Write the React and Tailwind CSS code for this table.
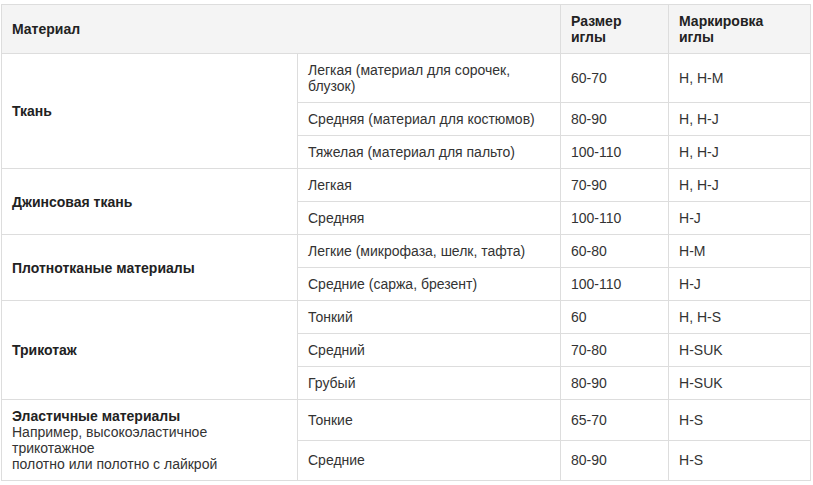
import React from 'react';

const rows = [
  {
    material: 'Ткань',
    items: [
      ['Легкая (материал для сорочек, блузок)', '60-70', 'H, H-M'],
      ['Средняя (материал для костюмов)', '80-90', 'H, H-J'],
      ['Тяжелая (материал для пальто)', '100-110', 'H, H-J'],
    ],
  },
  {
    material: 'Джинсовая ткань',
    items: [
      ['Легкая', '70-90', 'H, H-J'],
      ['Средняя', '100-110', 'H-J'],
    ],
  },
  {
    material: 'Плотнотканые материалы',
    items: [
      ['Легкие (микрофаза, шелк, тафта)', '60-80', 'H-M'],
      ['Средние (саржа, брезент)', '100-110', 'H-J'],
    ],
  },
  {
    material: 'Трикотаж',
    items: [
      ['Тонкий', '60', 'H, H-S'],
      ['Средний', '70-80', 'H-SUK'],
      ['Грубый', '80-90', 'H-SUK'],
    ],
  },
  {
    material: 'Эластичные материалы',
    note: ['Например, высокоэластичное трикотажное', 'полотно или полотно с лайкрой'],
    items: [
      ['Тонкие', '65-70', 'H-S'],
      ['Средние', '80-90', 'H-S'],
    ],
  },
];

const cell = 'border border-[#dddddd] px-[10px] py-2 align-middle';

export default function App() {
  return (
    <div className="bg-white min-h-[485px] pt-1 pl-px font-['Liberation_Sans',Arial,sans-serif] text-[14px] leading-4 text-[#333333]">
      <table className="w-[809px] table-fixed border-collapse">
        <colgroup>
          <col className="w-[296px]" />
          <col className="w-[263px]" />
          <col className="w-[108px]" />
          <col className="w-[142px]" />
        </colgroup>
        <thead>
          <tr className="bg-[#f4f4f4] text-left font-bold text-[#222222]">
            <th colSpan={2} className={cell}>Материал</th>
            <th className={cell}>Размер<br />иглы</th>
            <th className={cell}>Маркировка<br />иглы</th>
          </tr>
        </thead>
        <tbody>
          {rows.map((group) =>
            group.items.map((item, i) => (
              <tr key={group.material + i}>
                {i === 0 && (
                  <td rowSpan={group.items.length} className={cell}>
                    <div className="font-bold text-[#222222]">{group.material}</div>
                    {group.note && (
                      <div>
                        {group.note[0]}
                        <br />
                        {group.note[1]}
                      </div>
                    )}
                  </td>
                )}
                <td className={cell}>{item[0]}</td>
                <td className={cell}>{item[1]}</td>
                <td className={cell}>{item[2]}</td>
              </tr>
            ))
          )}
        </tbody>
      </table>
    </div>
  );
}
